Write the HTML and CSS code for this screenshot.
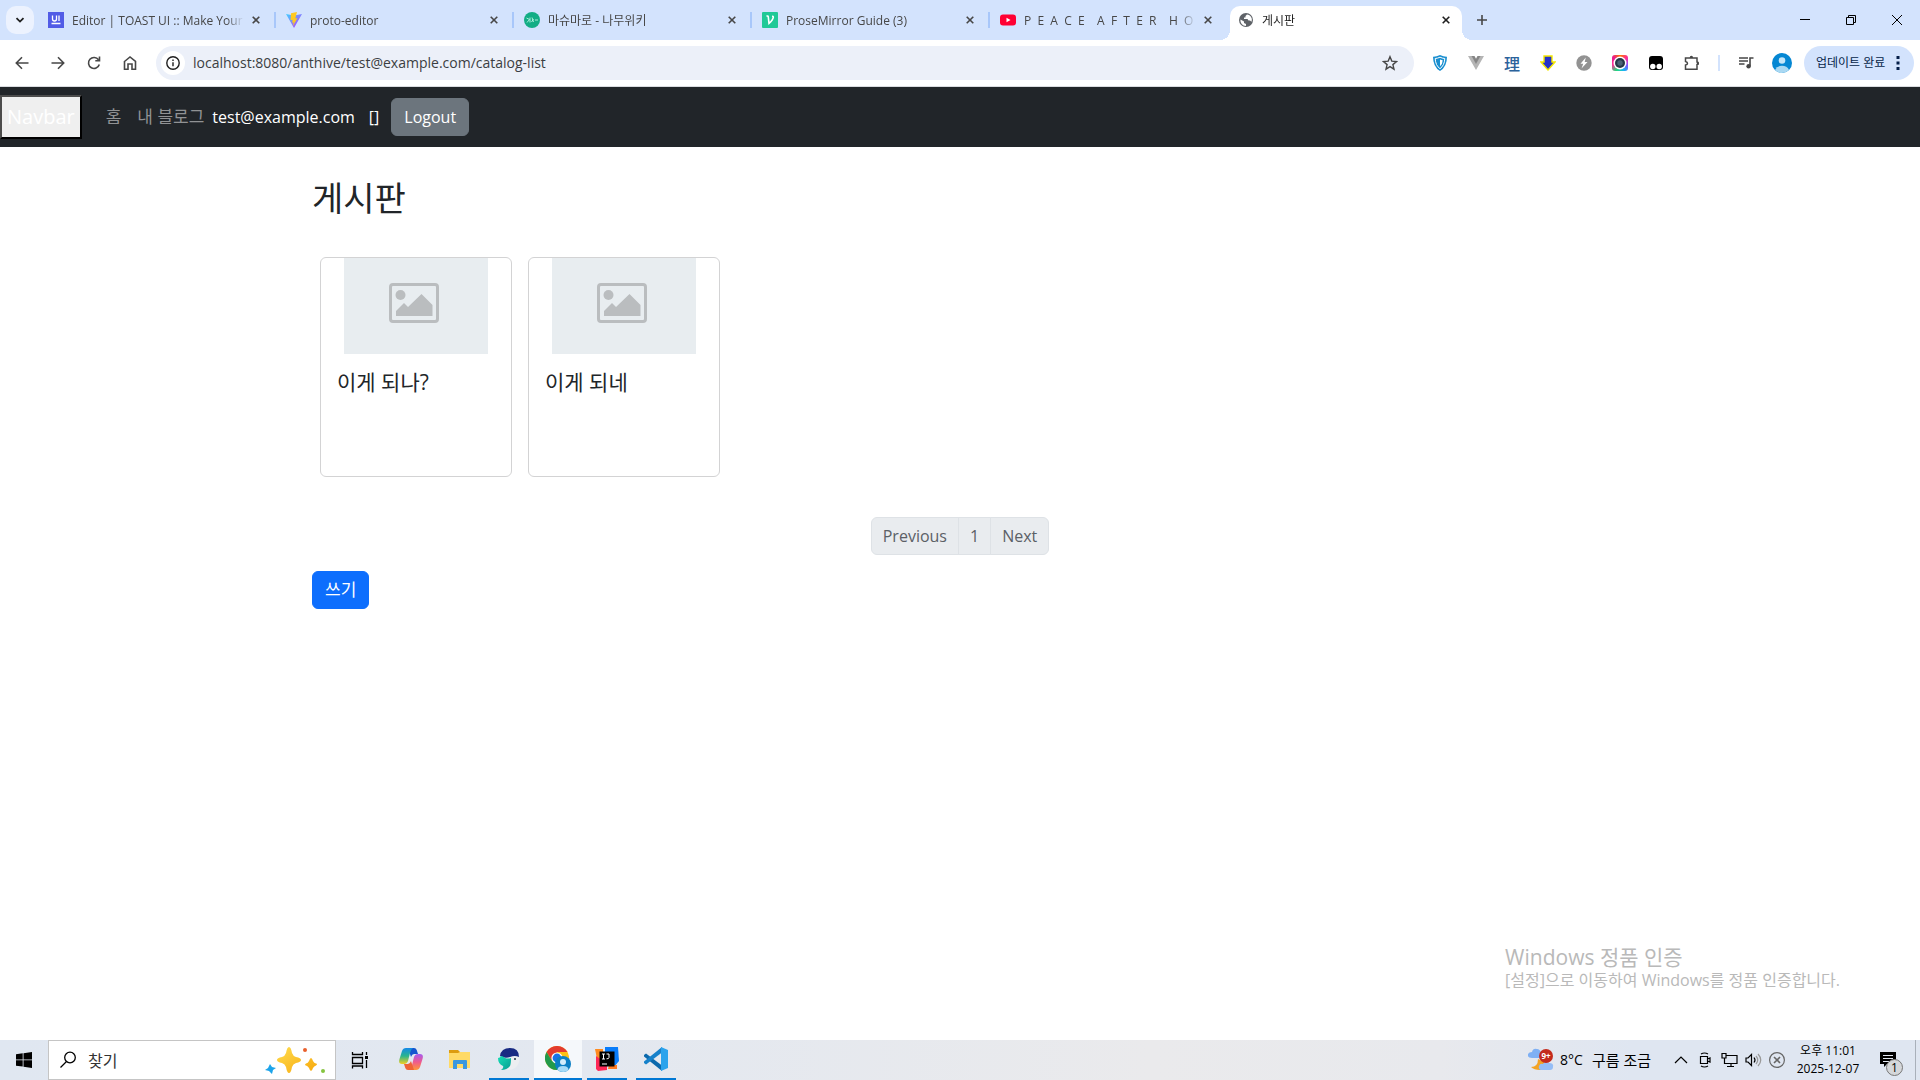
FILE: index.html
```html
<!DOCTYPE html>
<html lang="ko">
<head>
	<meta charset="UTF-8">
	<title>게시판</title>
	<link rel="stylesheet" href="styles.css">
</head>
<body>
	<header class="browser">
		<div class="tabstrip">
			<button class="tab-search" aria-label="탭 검색"><svg width="10" height="10" viewBox="0 0 10 10"><path d="M1.5 3.2 5 6.6l3.5-3.4" fill="none" stroke="#1f1f1f" stroke-width="1.8"/></svg></button>
			<div class="tab">
				<svg class="favicon" viewBox="0 0 16 16"><path fill="#515ce6" d="M0 0h16v16H0z"/><path d="M4.5 3.5V7q0 2 2 2t2-2V3.500M11 3.500v5.500M3.500 11.500h9" fill="none" stroke="#fff" stroke-width="1.3"/></svg>
				<button class="tab-title">Editor | TOAST UI :: Make Your</button>
				<button class="close" aria-label="닫기"><svg viewBox="0 0 8 8"><path d="m.7.7 6.600 6.600m0-6.600L.7 7.300"/></svg></button>
			</div>
			<div class="tab">
				<svg class="favicon" viewBox="0 0 16 16"><defs><linearGradient id="vite" x1="0" y1="0" x2="1" y2="1"><stop stop-color="#41d1ff"/><stop offset="1" stop-color="#bd34fe"/></linearGradient></defs><path fill="url(#vite)" d="m0 2 8 14 8-14-8 1.500z"/><path fill="#ffc920" d="m11 0-6 1.200-.5 7 2.200-.4-.7 3 1.600-.5-.8 4L11.500 6l-2.200.4z"/></svg>
				<button class="tab-title">proto-editor</button>
				<button class="close" aria-label="닫기"><svg viewBox="0 0 8 8"><path d="m.7.7 6.600 6.600m0-6.600L.7 7.300"/></svg></button>
			</div>
			<div class="tab">
				<svg class="favicon" viewBox="0 0 16 16"><circle cx="8" cy="8" r="8" fill="#13ad85"/><path d="m2.500 6 3 1.500L3 10.500m3-5v5m2-5 1.500 4.500M7.500 10l2-3m1.500 1h3" fill="none" stroke="#b9f5e2" stroke-width=".9"/></svg>
				<button class="tab-title">마슈마로 - 나무위키</button>
				<button class="close" aria-label="닫기"><svg viewBox="0 0 8 8"><path d="m.7.7 6.600 6.600m0-6.600L.7 7.300"/></svg></button>
			</div>
			<div class="tab">
				<svg class="favicon" viewBox="0 0 16 16"><rect width="16" height="16" rx="1" fill="#20c997"/><path d="M4.500 4.300q1.600-.8 1.800.7l.7 6.500q4-3.500 4.300-6.300.1-1-1.300-1" fill="none" stroke="#fff" stroke-width="1.600"/></svg>
				<button class="tab-title">ProseMirror Guide (3)</button>
				<button class="close" aria-label="닫기"><svg viewBox="0 0 8 8"><path d="m.7.7 6.600 6.600m0-6.600L.7 7.300"/></svg></button>
			</div>
			<div class="tab last">
				<svg class="favicon" viewBox="0 0 16 16"><rect y="2.500" width="16" height="11" rx="3" fill="#f03"/><path fill="#fff" d="m6.500 5.700 4 2.300-4 2.300z"/></svg>
				<button class="tab-title">P  E  A  C  E    A  F  T  E  R    H  O</button>
				<button class="close" aria-label="닫기"><svg viewBox="0 0 8 8"><path d="m.7.7 6.600 6.600m0-6.600L.7 7.300"/></svg></button>
			</div>
			<div class="tab active">
				<svg class="favicon" viewBox="0 0 16 16"><circle cx="8" cy="8" r="7" fill="#5f6368"/><path fill="#fff" d="M2.500 7.500 6 9.500V11l2 1v2C4.500 14 2 11 2.500 7.500zM9 2.500 7.500 4v1.500H6V7h3.500l1 1.500H12l1.500 1.200C14.800 6 12.500 3 9 2.500z"/></svg>
				<button class="tab-title">게시판</button>
				<button class="close" aria-label="닫기"><svg viewBox="0 0 8 8"><path d="m.7.7 6.600 6.600m0-6.600L.7 7.300"/></svg></button>
			</div>
			<button class="new-tab" aria-label="새 탭"><svg width="10" height="10" viewBox="0 0 10 10"><path d="M5 0v10M0 5h10" stroke="#474747" stroke-width="1.600"/></svg></button>
			<div class="window-btns">
				<button aria-label="최소화"><svg width="10" height="10" viewBox="0 0 10 10"><path d="M0 4.500h10" stroke="#000"/></svg></button>
				<button aria-label="이전 크기로"><svg width="10" height="10" viewBox="0 0 10 10"><path d="M.5 2.500h7v7h-7zM2.500 2.500v-2h7v7h-2" fill="none" stroke="#000"/></svg></button>
				<button aria-label="닫기"><svg width="10" height="10" viewBox="0 0 10 10"><path d="m0 0 10 10M10 0 0 10" stroke="#000"/></svg></button>
			</div>
		</div>
		<div class="toolbar">
			<div class="nav-btns">
				<button aria-label="뒤로"><svg viewBox="0 0 16 16"><path d="M14.500 8H2.500M8 2.300 2.300 8 8 13.700"/></svg></button>
				<button aria-label="앞으로"><svg viewBox="0 0 16 16"><path d="M1.500 8h12M8 2.300 13.700 8 8 13.700"/></svg></button>
				<button aria-label="새로고침"><svg viewBox="0 0 16 16"><path d="M13.300 9.500A5.500 5.500 0 1 1 12.500 4.800M13.500 1.500v4.200H9.300"/></svg></button>
				<button aria-label="홈"><svg viewBox="0 0 16 16"><path d="M2.500 6.500 8 2l5.500 4.500v7.700H10V9H6v5.200H2.500z"/></svg></button>
			</div>
			<div class="omnibox">
				<button class="site-info" aria-label="사이트 정보"><svg width="14" height="14" viewBox="0 0 14 14"><circle cx="7" cy="7" r="6.200" fill="none" stroke="#1f1f1f" stroke-width="1.400"/><path d="M7 6.200v4M7 3.500V5" stroke="#1f1f1f" stroke-width="1.400"/></svg></button>
				<input type="text" aria-label="주소창" value="localhost:8080/anthive/test@example.com/catalog-list">
				<button class="star" aria-label="북마크"><svg width="16" height="16" viewBox="0 0 16 16"><path d="m8 1.700 1.800 4.400 4.700.4-3.600 3.100 1.100 4.600L8 11.700l-4 2.500 1.100-4.600-3.600-3.100 4.700-.4z" fill="none" stroke="#474747" stroke-width="1.400"/></svg></button>
			</div>
			<div class="extensions">
				<button aria-label="방패"><svg viewBox="0 0 16 16"><path fill="#1a8fd0" d="M8 0q4 2 7 1.800Q15 12 8 16 1 12 1 1.800 4 2 8 0z"/><path d="M8 2.200q2.500 1.200 4.800 1.300Q12.500 10.500 8 13.700 3.500 10.500 3.200 3.500 5.500 3.400 8 2.200z" fill="#1a8fd0" stroke="#fff"/><path d="M8 4.500q1.500.7 2.700.7Q10.500 9.500 8 11.300z" fill="#fff"/></svg></button>
				<button aria-label="Vue"><svg viewBox="0 0 16 16"><path fill="#b5b5b5" d="M0 1h4l4 7 4-7h4L8 15z"/><path fill="#858585" d="M3.500 1h3L8 3.700 9.500 1h3L8 9z"/></svg></button>
				<button class="ext-text">理</button>
				<button aria-label="다운로드"><svg viewBox="0 0 16 16"><path fill="#2532c8" stroke="#f4e800" stroke-width="1.400" d="M4 1h8v6h3l-7 8-7-8h3z"/></svg></button>
				<button aria-label="번개"><svg viewBox="0 0 16 16"><circle cx="8" cy="8" r="7.700" fill="#929292"/><path fill="#fff" d="M9.800 2.500 4.500 8.700h2.700L5.500 13.500l6-6.500H8.700z"/></svg></button>
				<button class="ext-camera" aria-label="캡처"><svg viewBox="0 0 16 16"><circle cx="8" cy="8" r="6.500" fill="#fff"/><circle cx="8" cy="8" r="5" fill="#263747"/><circle cx="8" cy="8" r="2.700" fill="#4b6275"/></svg></button>
				<button aria-label="Tampermonkey"><svg viewBox="0 0 16 16"><rect x="1" y="1" width="14" height="14" rx="3" fill="#000"/><circle cx="4.800" cy="11.500" r="2.700" fill="#fff"/><circle cx="11.200" cy="11.500" r="2.700" fill="#fff"/></svg></button>
				<button aria-label="확장 프로그램"><svg viewBox="0 0 16 16"><path d="M1.500 3h11.500v4a1.200 1.200 0 0 1 0 2.600v4.600H1.500V10q2-.4 2-1.800t-2-1.800z" fill="none" stroke="#474747" stroke-width="1.500"/><path d="M5.700 3a1.700 2.200 0 0 1 3.400 0M13 6.700a2 1.700 0 0 1 0 3.400" fill="#474747"/></svg></button>
			</div>
			<span class="divider"></span>
			<div class="user-area">
				<button aria-label="미디어"><svg width="16" height="16" viewBox="0 0 16 16"><path d="M1 3h9M1 6h9M1 9h5.500M12 11V3h3.500" fill="none" stroke="#474747" stroke-width="1.600"/><circle cx="10.600" cy="11.300" r="2.200" fill="#474747"/></svg></button>
				<button aria-label="프로필"><svg width="20" height="20" viewBox="0 0 20 20"><circle cx="10" cy="10" r="10" fill="#0587d3"/><circle cx="10" cy="7.500" r="3.300" fill="#c5e6f8"/><path fill="#a9d8f2" d="M3 17q2-4.200 7-4.200t7 4.200q-3 3-7 3t-7-3z"/></svg></button>
			</div>
			<button class="update">업데이트 완료<svg width="4" height="16" viewBox="0 0 4 16"><path d="M.5 1h3v3h-3zM.5 6.500h3v3h-3zM.5 12h3v3h-3z" fill="#041e49"/></svg></button>
		</div>
	</header>

	<nav class="navbar">
		<button class="navbar-brand">Navbar</button>
		<ul>
			<li><a class="nav-link" href="#">홈</a></li>
			<li><a class="nav-link" href="#">내 블로그</a></li>
		</ul>
		<span class="user">test@example.com</span>
		<span class="roles">[]</span>
		<button class="btn btn-secondary">Logout</button>
	</nav>

	<main class="container">
		<h2>게시판</h2>
		<div class="cards">
			<a class="card" href="#">
				<svg class="thumb" viewBox="0 0 144 96"><path fill="#e8edf0" d="M0 0h144v96H0z"/><rect x="46.500" y="26.500" width="47" height="37" rx="2.500" fill="none" stroke="#babdbf" stroke-width="3"/><circle cx="56.500" cy="37" r="5" fill="#babdbf"/><path fill="#babdbf" d="M52 58v-5l8-8 4 4 13.500-13L88.500 47v11z"/></svg>
				<h5>이게 되나?</h5>
			</a>
			<a class="card" href="#">
				<svg class="thumb" viewBox="0 0 144 96"><path fill="#e8edf0" d="M0 0h144v96H0z"/><rect x="46.500" y="26.500" width="47" height="37" rx="2.500" fill="none" stroke="#babdbf" stroke-width="3"/><circle cx="56.500" cy="37" r="5" fill="#babdbf"/><path fill="#babdbf" d="M52 58v-5l8-8 4 4 13.500-13L88.500 47v11z"/></svg>
				<h5>이게 되네</h5>
			</a>
		</div>
		<ul class="pagination">
			<li><a href="#">Previous</a></li>
			<li><a href="#">1</a></li>
			<li><a href="#">Next</a></li>
		</ul>
		<button class="btn btn-primary">쓰기</button>
	</main>

	<div class="watermark">
		<p class="big">Windows 정품 인증</p>
		<p>[설정]으로 이동하여 Windows를 정품 인증합니다.</p>
	</div>

	<footer class="taskbar">
		<button class="start" aria-label="시작"><svg width="16" height="16" viewBox="0 0 16 16"><path d="m0 2.200 6.700-.9v6.200H0zM7.500 1.200 16 0v7.500H7.500zM0 8.300h6.700v6.300L0 13.700zM7.500 8.300H16V16l-8.500-1.200z"/></svg></button>
		<div class="search">
			<svg width="16" height="18" viewBox="0 0 16 18"><circle cx="10" cy="6.500" r="5.300" fill="none" stroke="#000" stroke-width="1.300"/><path d="m6.500 10.500-6 6" stroke="#000" stroke-width="1.300"/></svg>
			<input type="text" aria-label="찾기" placeholder="찾기">
			<svg width="62" height="28" viewBox="0 0 62 28"><defs><linearGradient id="spark" x2="1" y2="1"><stop stop-color="#ffdc4d"/><stop offset="1" stop-color="#f7a80c"/></linearGradient></defs><path fill="url(#spark)" d="M24 1q2 0 3 6 1 3 4 4 5 1 5 3t-5 3q-3 1-4 4-1 6-3 6t-3-6q-1-3-4-4-5-1-5-3t5-3q3-1 4-4 1-6 3-6zM46 12q1 0 2 3 1 2 3 2.500t0 2q-2 .5-3 2.500-1 3-2 3t-2-3q-1-2-3-2.500t0-2q2-.5 3-2.500 1-3 2-3z"/><path fill="#1da4ea" d="m5 18 2 3 4 1-3 2-1 4-3-3-4-1 3-2z"/><circle cx="40" cy="4" r="2" fill="#e9602c"/><circle cx="58" cy="25" r="2" fill="#86c440"/></svg>
		</div>
		<button class="taskview" aria-label="작업 보기"><svg width="18" height="18" viewBox="0 0 18 18"><path d="M1.500 1v2.500h10V1M1.500 6.500h10v6h-10zM1.500 17.500V15h10v2.500M15.500 1v3M15.500 9v8" fill="none" stroke="#000" stroke-width="1.300"/><path d="M14 5h3v3h-3z"/></svg></button>
		<div class="apps">
			<button class="app" aria-label="Copilot"><svg viewBox="0 0 24 24"><defs><linearGradient id="cpa" x2="0" y2="1"><stop stop-color="#1488e8"/><stop offset=".5" stop-color="#29b58e"/><stop offset="1" stop-color="#f3cf20"/></linearGradient><linearGradient id="cpb" x2="0" y2="1"><stop stop-color="#a65cf0"/><stop offset=".5" stop-color="#ef5a8e"/><stop offset="1" stop-color="#ff9838"/></linearGradient></defs><path fill="#1556cf" d="M9 1h6q2 0 2.700 2L19 7h-4q-2 0-3 3z"/><path fill="url(#cpa)" d="M7 1h7q-2 1-3 5l-2 8q-1 3-4 3H3q-4 0-2.500-5L3 4q1-3 4-3z"/><path fill="url(#cpb)" d="M17 23h-7q2-1 3-5l2-8q1-3 4-3h2q4 0 2.500 5L21 20q-1 3-4 3z"/><path fill="#ee6336" d="M15 23H9q-2 0-2.700-2L5 17h4q2 0 3-3z"/></svg></button>
			<button class="app" aria-label="파일 탐색기"><svg viewBox="0 0 24 24"><path fill="#dc9c10" d="M1 3h9l2 2v4H1z"/><path fill="#ffda67" d="M1 6h9l2-1h10v16H1z"/><path fill="#3998df" d="M5 14q0-1 1-1h12q1 0 1 1v8h-4v-5H9v5H5z"/></svg></button>
			<button class="app running" aria-label="Whale"><svg viewBox="0 0 24 24"><defs><linearGradient id="whale" x2="1" y2="1"><stop stop-color="#17dfb6"/><stop offset="1" stop-color="#069b91"/></linearGradient></defs><path fill="#eceef1" d="M14 8q5-1 8 0 2 8-4 13-3 2-8 2z"/><path fill="#192b83" d="M3 9q1-8 10-8t9 9q-4-2-9 0T3 9z"/><path fill="url(#whale)" d="M1 11q2 0 3-2 2 0 4 2 3 1 6 0 0 6-1 8-3 4-9 4 3-2 2-4-5-2-5-8z"/><circle cx="18" cy="12" r="1" fill="#234"/></svg></button>
			<button class="app running current" aria-label="Chrome"><svg width="26" viewBox="0 0 26 26"><circle cx="12" cy="12" r="12" fill="#fbc116"/><path fill="#e33b2e" d="M1.600 6A12 12 0 0 1 22.400 6H12l-5 9z"/><path fill="#229a4b" d="M1.600 6A12 12 0 0 0 12 24l5-9H7z"/><circle cx="12" cy="12" r="5.600" fill="#fff"/><circle cx="12" cy="12" r="4.400" fill="#1a73e8"/><circle cx="18" cy="18" r="8" fill="#0b7fc4"/><circle cx="18" cy="16" r="3" fill="#d2edfb"/><path fill="#a5dbf7" d="M12.500 24q0-4 5.500-4t5.500 4q-5 4-11 0z"/></svg></button>
			<button class="app running" aria-label="IntelliJ IDEA"><svg viewBox="0 0 24 24"><path fill="#ff8b20" d="M0 2h8v12L2 12z"/><path fill="#fe2857" d="m1 9 11 8v6l-9 1-2-2z"/><path fill="#087cfa" d="M10 0h13l1 14-5 6-9-9z"/><path fill="#ff7b22" d="M14 18h8v4h-9z"/><path d="M4.500 4.500h15v15h-15z"/><path d="M7 7h3M8.500 7v5M7 12h3M11.500 7H14v3.500q0 1.500-2.500 1.300M7 17h5" fill="none" stroke="#fff" stroke-width="1"/></svg></button>
			<button class="app running" aria-label="VS Code"><svg viewBox="0 0 24 24"><path fill="#0b69ad" d="m0 8 2-1.500 16 12V24L0 9.500z"/><path fill="#1681ca" d="m0 16 2 1.500 16-12V0L0 14.500z"/><path fill="#2ba3ec" d="m17 0 7 3v18l-7 3z"/></svg></button>
		</div>
		<div class="tray">
			<button class="weather"><svg width="26" height="24" viewBox="0 0 26 24"><path fill="#f3a324" d="M10 11q0 8-7 8 3 3 9 3 6-1 6-7z"/><path fill="#7fb0f4" d="M4 10q-5 0-4-4 1-2 4-2 1-4 5-3 3 0 4 4 4 2 1 5z"/><path fill="#94bdf6" d="M13 22q-3-1-2-4t4-2q2-4 6-1 5 0 4 4 0 3-3 3z"/><circle cx="18" cy="8" r="7" fill="#c42b1c"/><text x="18" y="11" class="count">9+</text></svg><span>8°C</span><span class="sky">구름 조금</span></button>
			<button aria-label="숨겨진 아이콘"><svg width="14" height="16" viewBox="0 0 14 16"><path d="m1 11 6-6 6 6"/></svg></button>
			<button aria-label="카메라"><svg width="14" height="16" viewBox="0 0 14 16"><path d="M2.500 4.500h7v7h-7zM9.500 7l2.500-1v4l-2.500-1M3 2q3.500-2 7 0M3 14q3.500 2 7 0"/></svg></button>
			<button aria-label="네트워크"><svg width="17" height="16" viewBox="0 0 17 16"><path d="M5 3.500h11v8H3.500V6M10 11.500V14M6 14.500h7M1 1.500h4V6H1z"/></svg></button>
			<button aria-label="볼륨"><svg width="17" height="16" viewBox="0 0 17 16"><path d="M1 6h2l3.500-3.500v11L3 10H1zM9 5.500q2 2.500 0 5"/><path class="faint" d="M11 4q3.500 4 0 8M13 2q5.500 6 0 12"/></svg></button>
			<button aria-label="상태"><svg width="16" height="16" viewBox="0 0 16 16"><g stroke="#666"><circle cx="8" cy="8" r="7.400"/><path d="m5 5 6 6m0-6-6 6" stroke-width="1.600"/></g></svg></button>
			<button class="clock"><span>오후 11:01</span><span>2025-12-07</span></button>
			<button class="notice" aria-label="알림"><svg width="16" height="16" viewBox="0 0 16 16"><path fill="#000" d="M0 0h16v12H7l-3 3v-3H0z"/><path stroke="#e3e9f3" d="M3 3.500h10M3 6.500h10M3 9.500h7"/></svg><span class="badge">1</span></button>
			<span class="show-desktop"></span>
		</div>
	</footer>
</body>
</html>
```
FILE: styles.css
```css
* {
	box-sizing: border-box;
}
body {
	margin: 0;
	min-height: 100vh;
	display: flex;
	flex-direction: column;
	position: relative;
	background: #fff;
	color: #212529;
	font: 16px/24px "Open Sans", "Noto Sans CJK KR", sans-serif;
}
button {
	margin: 0;
	padding: 0;
	border: 0;
	background: none;
	color: inherit;
	font: inherit;
}
svg {
	display: block;
	flex: none;
}
ul, p, h2, h5 {
	margin: 0;
	padding: 0;
	font-weight: 400;
	list-style: none;
}
a {
	color: inherit;
	text-decoration: none;
}

/* browser */
.tabstrip {
	display: flex;
	height: 40px;
	background: #d3e3fd;
	padding-left: 6px;
	font-size: 12px;
	line-height: 16px;
	color: #474747;
}
.tab-search {
	width: 28px;
	height: 28px;
	margin: 6px 4px 0 0;
	border-radius: 10px;
	background: #ecf2fe;
	display: flex;
	align-items: center;
	justify-content: center;
}
.tab {
	flex: 0 1 238px;
	min-width: 0;
	height: 40px;
	display: flex;
	align-items: center;
	gap: 8px;
	padding: 0 16px 0 10px;
	background: linear-gradient(#a8c7fa, #a8c7fa) right center / 2px 16px no-repeat;
}
.tab.last {
	background: none;
}
.tab.active {
	flex-basis: 232px;
	position: relative;
	height: 34px;
	margin: 6px 4px 0 2px;
	padding: 0 12px 6px 8px;
	border-radius: 10px 10px 0 0;
	background: #fff;
	color: #1f1f1f;
}
.tab.active::before,
.tab.active::after {
	content: "";
	position: absolute;
	bottom: 0;
	width: 10px;
	height: 10px;
}
.tab.active::before {
	right: 100%;
	background: radial-gradient(circle at 0 0, transparent 10px, #fff 10px);
}
.tab.active::after {
	left: 100%;
	background: radial-gradient(circle at 100% 0, transparent 10px, #fff 10px);
}
.favicon {
	width: 16px;
	height: 16px;
}
.tab-title {
	flex: 1;
	min-width: 0;
	padding-top: 2px;
	text-align: left;
	white-space: pre;
	overflow: hidden;
	-webkit-mask-image: linear-gradient(to right, #000 90%, transparent);
	mask-image: linear-gradient(to right, #000 90%, transparent);
}
.close svg {
	width: 8px;
	height: 8px;
	fill: none;
	stroke: currentColor;
	stroke-width: 1.6;
}
.new-tab {
	width: 32px;
	padding-left: 11px;
}
.window-btns {
	margin-left: auto;
	display: flex;
}
.window-btns button {
	width: 46px;
	display: flex;
	align-items: center;
	justify-content: center;
}
.toolbar {
	display: flex;
	align-items: center;
	height: 47px;
	padding: 0 6px 0 4px;
	border-bottom: 1px solid #dadce0;
}
.nav-btns {
	display: flex;
	width: 152px;
}
.nav-btns button {
	width: 36px;
	display: flex;
	justify-content: center;
}
.nav-btns svg {
	width: 16px;
	height: 16px;
	fill: none;
	stroke: #474747;
	stroke-width: 1.6;
}
.omnibox {
	flex: 1;
	height: 34px;
	display: flex;
	align-items: center;
	padding: 0 16px 0 5px;
	border-radius: 17px;
	background: #ecf0f9;
}
.site-info {
	width: 24px;
	height: 24px;
	border-radius: 50%;
	background: #fff;
	display: flex;
	align-items: center;
	justify-content: center;
}
.omnibox input {
	flex: 1;
	min-width: 0;
	margin: 0 8px;
	padding: 0;
	border: 0;
	background: none;
	color: #3b3e42;
	font: 14px/20px "Open Sans", sans-serif;
}
.extensions {
	display: flex;
	gap: 20px;
	padding: 0 18px;
}
.extensions svg {
	width: 16px;
	height: 16px;
}
.ext-text {
	width: 16px;
	height: 16px;
	color: #2a629b;
	font: 500 16px/14px "Noto Sans CJK JP", sans-serif;
}
.ext-camera {
	border-radius: 3px;
	background: conic-gradient(#ff7a00, #ff2d95, #8a4dff, #16b7f2, #25d97c, #ff2d95, #e8188e, #ff7a00);
}
.divider {
	width: 2px;
	height: 16px;
	background: #d3e3fd;
}
.user-area {
	display: flex;
	align-items: center;
	gap: 18px;
	padding: 0 12px 0 18px;
}
.update {
	display: flex;
	align-items: center;
	justify-content: space-between;
	width: 110px;
	height: 34px;
	padding: 0 14px 0 12px;
	border-radius: 17px;
	background: #d3e3fd;
	color: #041e49;
	font-size: 12px;
}

/* page */
.navbar {
	display: flex;
	align-items: center;
	height: 60px;
	background: #212529;
	color: #fff;
}
.navbar-brand {
	padding: 5px;
	margin-right: 16px;
	border: 2px outset #000;
	border-color: #4c4c4c #000 #000 #4c4c4c;
	background: #efefef;
	font-size: 20px;
	line-height: 30px;
}
.navbar ul {
	display: flex;
}
.nav-link {
	display: block;
	padding: 8px;
	font-size: 17px;
	color: #909294;
}
.user {
	margin-right: 14px;
}
.roles {
	margin-right: 12px;
}
.btn {
	padding: 6px 12px;
	border: 1px solid;
	border-radius: 6px;
	color: #fff;
}
.btn-secondary {
	background: #6c757d;
	border-color: #6c757d;
}
.btn-primary {
	background: #0d6efd;
	border-color: #0d6efd;
	font-size: 17px;
}
.container {
	flex: 1;
	width: 100%;
	max-width: 1320px;
	margin: 0 auto;
	padding: 32px 12px;
}
.container h2 {
	font-size: 34px;
	line-height: 38px;
	margin-bottom: 32px;
}
.cards {
	display: flex;
	flex-wrap: wrap;
	gap: 16px;
	padding: 8px;
	margin-bottom: 32px;
}
.card {
	width: 192px;
	height: 220px;
	border: 1px solid #d3d3d4;
	border-radius: 6px;
}
.thumb {
	width: 144px;
	height: 96px;
	margin: 0 auto;
}
.card h5 {
	padding: 16px;
	font-size: 21px;
	line-height: 24px;
}
.pagination {
	display: flex;
	justify-content: center;
	margin-bottom: 16px;
}
.pagination a {
	display: block;
	padding: 6px 11px;
	border: 1px solid #dee2e6;
	background: #e9ecef;
	color: #5b6066;
}
.pagination li + li {
	margin-left: -1px;
}
.pagination li:first-child a {
	border-radius: 6px 0 0 6px;
}
.pagination li:last-child a {
	border-radius: 0 6px 6px 0;
}
.watermark {
	position: absolute;
	right: 80px;
	bottom: 90px;
	color: #b9b9b9;
	font-size: 16px;
	line-height: 20px;
}
.watermark .big {
	font-size: 21px;
	line-height: 26px;
}

/* taskbar */
.taskbar {
	display: flex;
	height: 40px;
	background: linear-gradient(to right, #e0e7f1, #e3e8f0 30%, #eaeaec 60%, #e8e9ed 75%, #dfe6f1 85%);
	color: #000;
	font-size: 14px;
}
.taskbar button {
	display: flex;
	align-items: center;
	justify-content: center;
}
.start {
	width: 48px;
}
.search {
	display: flex;
	align-items: center;
	gap: 12px;
	width: 288px;
	padding: 0 8px 0 11px;
	border: 1px solid #c5c5c5;
	background: #fff;
}
.search input {
	flex: 1;
	min-width: 0;
	padding: 0;
	border: 0;
	background: none;
	font: 16px/24px "Noto Sans CJK KR", sans-serif;
}
.search input::placeholder {
	color: #333;
}
.taskview {
	width: 48px;
}
.apps {
	display: flex;
	gap: 1px;
	padding-left: 3px;
}
.app {
	width: 48px;
	border-bottom: 2px solid transparent;
}
.app svg {
	width: 24px;
	height: 24px;
}
.running {
	background: linear-gradient(#0078d4, #0078d4) center bottom / 40px 2px no-repeat border-box;
}
.current {
	background: linear-gradient(#0078d4, #0078d4) center bottom / 48px 2px no-repeat border-box, #f5f8fb;
}
.app.current svg {
	width: 26px;
	height: 26px;
}
.tray {
	display: flex;
	margin-left: auto;
}
.tray svg {
	fill: none;
	stroke: #000;
	stroke-width: 1.2;
}
.tray > button {
	width: 24px;
}
.tray .weather {
	width: auto;
	gap: 6px;
	margin-right: 18px;
}
.sky {
	margin-left: 3px;
	font-size: 15px;
}
.tray .weather svg,
.tray .notice svg {
	stroke: none;
}
.count {
	fill: #fff;
	font-size: 8px;
	font-weight: 700;
	text-anchor: middle;
}
.faint {
	stroke: #999;
}
.tray .clock {
	flex-direction: column;
	width: 78px;
	font-size: 12px;
	line-height: 18px;
}
.tray .notice {
	position: relative;
	width: 48px;
	padding-right: 6px;
}
.badge {
	position: absolute;
	left: 19px;
	top: 19px;
	width: 17px;
	height: 17px;
	border: 1px solid #777;
	border-radius: 50%;
	background: #d5d7da;
	font-size: 12px;
	line-height: 15px;
}
.show-desktop {
	width: 5px;
	border-left: 1px solid #a9b0ba;
}
```
